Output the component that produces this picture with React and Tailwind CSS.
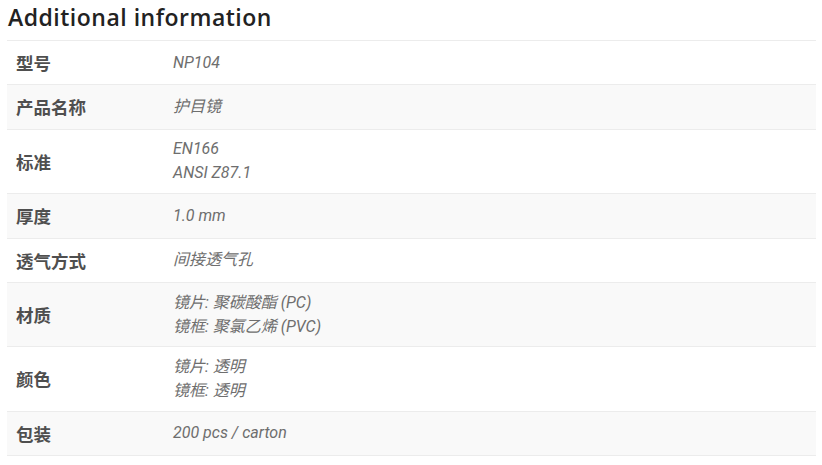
const rows = [
  { label: "型号", value: ["NP104"] },
  { label: "产品名称", value: ["护目镜"] },
  { label: "标准", value: ["EN166", "ANSI Z87.1"] },
  { label: "厚度", value: ["1.0 mm"] },
  { label: "透气方式", value: ["间接透气孔"] },
  { label: "材质", value: ["镜片: 聚碳酸酯 (PC)", "镜框: 聚氯乙烯 (PVC)"] },
  { label: "颜色", value: ["镜片: 透明", "镜框: 透明"] },
  { label: "包装", value: ["200 pcs / carton"] },
]

export default function App() {
  return (
    <div className="bg-white w-[822px] h-[465px] px-[7px] pt-[2px]">
      <h2 className="text-[23px] font-semibold text-[#222] tracking-[0.5px] leading-[30px] pl-px mb-[8px] font-['Open_Sans',sans-serif]">
        Additional information
      </h2>
      <table className="w-[809px] border-collapse table-fixed">
        <colgroup>
          <col className="w-[166px]" />
          <col />
        </colgroup>
        <tbody>
          {rows.map((row, i) => (
            <tr key={row.label} className={`border-t border-b border-[#ececec] ${i % 2 === 1 ? "bg-[#f9f9f9]" : "bg-white"}`}>
              <th className="text-left align-middle pl-[9px] py-2 text-[17.5px] leading-[27.4px] font-bold text-[#4f4f4f] font-['Noto_Sans_CJK_SC',sans-serif]">
                {row.label}
              </th>
              <td className="align-middle py-[7.67px] text-[16px] leading-[24px] italic text-[#6e6e6e] font-['Roboto','Noto_Sans_CJK_SC',sans-serif]">
                {row.value.map((v) => (
                  <div key={v}>{v}</div>
                ))}
              </td>
            </tr>
          ))}
        </tbody>
      </table>
    </div>
  )
}
